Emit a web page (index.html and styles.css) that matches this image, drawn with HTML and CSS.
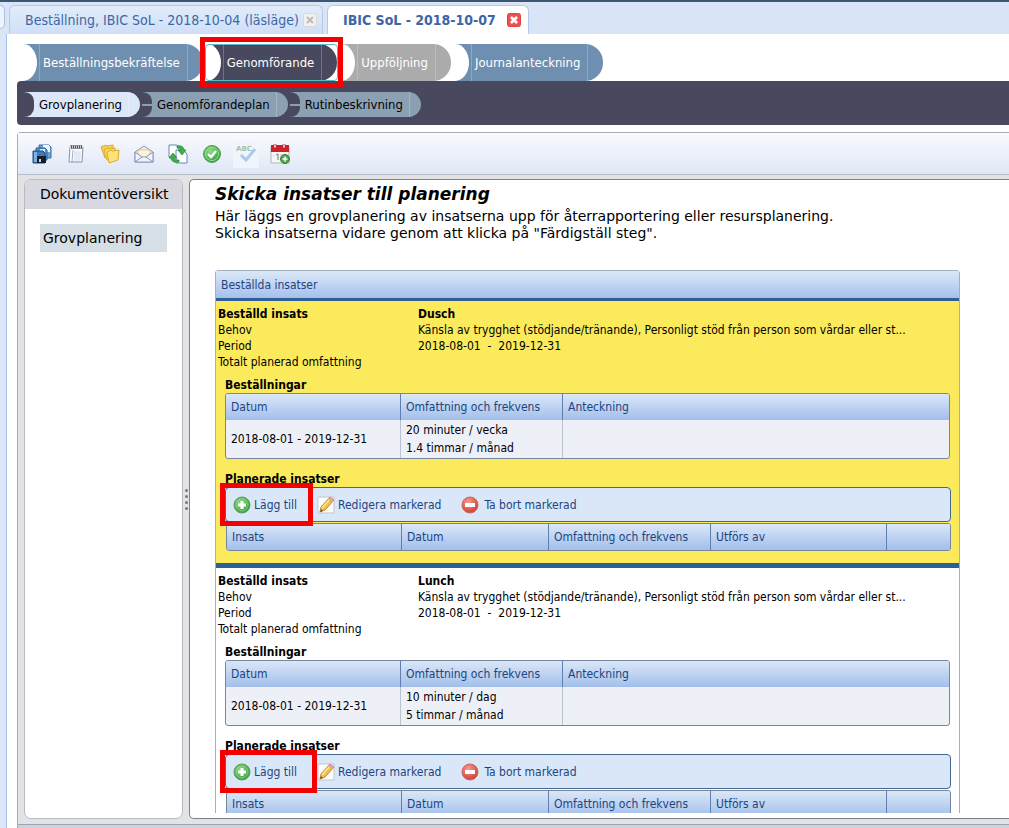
FILE: index.html
```html
<!DOCTYPE html>
<html lang="sv">
<head>
<meta charset="utf-8">
<title>IBIC SoL - 2018-10-07</title>
<link rel="stylesheet" href="styles.css">
</head>
<body>
<svg class="defs" aria-hidden="true">
  <defs>
    <radialGradient id="green" cx=".4" cy=".35" r=".7"><stop offset="0" stop-color="#8fdc84"/><stop offset="1" stop-color="#2f9a3c"/></radialGradient>
    <radialGradient id="red" cx=".4" cy=".3" r=".75"><stop offset="0" stop-color="#f79a8c"/><stop offset="1" stop-color="#cf3a33"/></radialGradient>
    <symbol id="add" viewBox="0 0 18 18"><circle cx="9" cy="9" r="8" fill="url(#green)" stroke="#5b9c5f"/><circle cx="9" cy="9" r="6" fill="none" stroke="#9be08f" opacity=".6"/><path d="M9 5v8M5 9h8" stroke="#fff" stroke-width="3"/></symbol>
    <symbol id="edit" viewBox="0 0 18 18"><path d="M1 1h16v16H1z" fill="#fcfcfc" stroke="#bfc6cf"/><path d="M13 1l4 3L8 14l-5 2 1-5z" fill="#f3c04a" stroke="#b98a35"/><path d="M13 1l4 3-2 2-4-3z" fill="#e8a0a0"/><path d="M3 16l1-3 2 2z" fill="#6b5a45"/><path d="M12 4l-7 8" stroke="#fde9a0" stroke-width="1.4"/></symbol>
    <symbol id="remove" viewBox="0 0 18 18"><circle cx="9" cy="9" r="8" fill="url(#red)" stroke="#d0645c"/><path d="M4 7h10v4H4z" fill="#fff"/></symbol>
  </defs>
</svg>

<nav class="tabs" aria-label="Flikar">
  <span class="tab-edge"></span>
  <div class="tab">
    <a href="#t1">Beställning, IBIC SoL - 2018-10-04 (läsläge)</a>
    <button class="tab-close" aria-label="Stäng"><svg viewBox="0 0 14 14"><rect x=".5" y=".5" width="13" height="13" rx="2" fill="#f1f1ee" stroke="#d9d9d6"/><path d="M4 4l6 6M10 4l-6 6" stroke="#bdbdbd" stroke-width="2"/></svg></button>
  </div>
  <div class="tab tab-active">
    <a href="#t2">IBIC SoL - 2018-10-07</a>
    <button class="tab-close" aria-label="Stäng"><svg viewBox="0 0 14 14"><rect x=".5" y=".5" width="13" height="13" rx="2" fill="#ee4f50" stroke="#d94143"/><path d="M4 4l6 6M10 4l-6 6" stroke="#fff" stroke-width="2.6"/></svg></button>
  </div>
</nav>

<main class="page">
  <nav class="steps" aria-label="Processteg">
    <button class="step"><span>Beställningsbekräftelse</span></button>
    <div class="marked marked-step"><button class="step step-current"><span>Genomförande</span></button></div>
    <button class="step step-grey"><span>Uppföljning</span></button>
    <button class="step"><span>Journalanteckning</span></button>
  </nav>
  <nav class="substeps" aria-label="Delsteg">
    <button class="substep substep-current"><span>Grovplanering</span></button>
    <button class="substep"><span>Genomförandeplan</span></button>
    <button class="substep"><span>Rutinbeskrivning</span></button>
  </nav>

  <section class="workspace">
    <div class="toolbar">
      <button aria-label="Spara"><svg viewBox="0 0 20 20"><path d="M7 1h10l2 2v11H7z" fill="#6aa3da" stroke="#3c6ea6"/><path d="M11 1h6l1 2v5h-7z" fill="#eef5fb"/><path d="M4 4h9l2 2v10H4z" fill="#5c97d0" stroke="#2b5c95"/><path d="M8 5h5v4H8z" fill="#dbe9f6"/><path d="M1 7h10l2 2v10H1z" fill="#3f79b8" stroke="#224a7c"/><path d="M2 8h3v10H2z" fill="#7db0e0"/><path d="M5 12h9v7H5z" fill="#16202c"/><path d="M7 15h2v3H7z" fill="#cfd8e2"/></svg></button>
      <button aria-label="Anteckning"><svg viewBox="0 0 20 20"><path d="M4 3h13l-1 15H3z" fill="#fafbfe" stroke="#8790a5"/><path d="M4 1h13v4H4z" fill="#d8dbe2"/><path d="M5 1l1 4M7 1l1 4M9 1l1 4M11 1l1 4M13 1l1 4M15 1l1 4" stroke="#3e4450"/><path d="M7 6L6 18" stroke="#9fb0d8"/><path d="M8 8h7M8 10h7M8 12h7M8 14h7M8 16h6" stroke="#c5cfe8" stroke-width=".8"/></svg></button>
      <button aria-label="Mappar"><svg viewBox="0 0 20 20"><path d="M1 3l5-2 1 1 6-1 1 10-9 3z" fill="#f5cf4d" stroke="#d9ac35"/><path d="M4 6l4-2 1 1 6-1 1 10-9 2z" fill="#fbdc68" stroke="#d9ac35"/><path d="M7 8l4-2 1 1 7-1-1 10-9 3z" fill="#fde374" stroke="#d9ac35"/></svg></button>
      <button aria-label="Meddelande"><svg viewBox="0 0 20 20"><path d="M1 8l9-6 9 6v10H1z" fill="#e8edf8" stroke="#8794bc"/><path d="M4 6h12v5l-6 4-6-4z" fill="#fff3dc" stroke="#e0b37a" stroke-width=".7"/><path d="M1 8l7 5h4l7-5v10H1z" fill="#eff3fc" stroke="#8794bc"/><path d="M1 18l7-5M19 18l-7-5" stroke="#8794bc"/></svg></button>
      <button aria-label="Uppdatera"><svg viewBox="0 0 20 20"><path d="M1 1h8l2 2v10H1z" fill="#fff" stroke="#6289b8"/><path d="M8 6h7l4 4v9H8z" fill="#fff" stroke="#6289b8"/><path d="M9 2c4-1 7 1 7 4h2l-4 5-4-5h3c0-2-2-2-4-2z" fill="#3fb047" stroke="#23842e" stroke-width=".7"/><path d="M11 18c-5 1-8-1-8-4H1l4-5 4 5H6c0 2 2 2 5 2z" fill="#3fb047" stroke="#23842e" stroke-width=".7"/></svg></button>
      <button aria-label="Färdigställ steg"><svg viewBox="0 0 20 20"><circle cx="10" cy="10" r="8.5" fill="url(#green)" stroke="#51a157"/><circle cx="10" cy="10" r="6.6" fill="none" stroke="#a7e29e" stroke-width=".8"/><path d="M6 10l3 3 5-6" fill="none" stroke="#fff" stroke-width="2.4"/></svg></button>
      <button class="tool-disabled" aria-label="Stavningskontroll" disabled><svg viewBox="0 0 20 20"><text x="0" y="7" class="abc">ABC</text><path d="M5 11l5 5 9-11" fill="none" stroke="#a9cbee" stroke-width="3"/></svg></button>
      <button aria-label="Ny bokning"><svg viewBox="0 0 20 20"><path d="M1 3h18v16H1z" fill="#f6f6f6" stroke="#b4b4b4"/><path d="M1 1h18v7H1z" fill="#cf1f2a"/><path d="M4 0h2v4H4zM13 0h2v4h-2z" fill="#fff" stroke="#8b2830" stroke-width=".6"/><path d="M6 11l2-1v6" stroke="#777" fill="none"/><path d="M3 12h1M10 11h3M10 14h2" stroke="#bbb"/><circle cx="15" cy="15" r="4.5" fill="#4da552" stroke="#347d3a"/><path d="M15 12.500v5M12.500 15h5" stroke="#fff" stroke-width="1.500"/></svg></button>
    </div>

    <div class="panes">
      <aside class="overview">
        <h2>Dokumentöversikt</h2>
        <a class="overview-item" href="#plan">Grovplanering</a>
      </aside>
      <div class="splitter"><i></i><i></i><i></i><i></i></div>
      <section class="document" id="plan">
        <div class="scroller">
          <h1>Skicka insatser till planering</h1>
          <p class="intro">Här läggs en grovplanering av insatserna upp för återrapportering eller resursplanering.<br>Skicka insatserna vidare genom att klicka på "Färdigställ steg".</p>

          <div class="orders">
            <div class="orders-head">Beställda insatser</div>

            <article class="order order-selected">
              <dl class="facts">
                <dt><b>Beställd insats</b></dt><dd><b>Dusch</b></dd>
                <dt>Behov</dt><dd>Känsla av trygghet (stödjande/tränande), Personligt stöd från person som vårdar eller st...</dd>
                <dt>Period</dt><dd>2018-08-01&nbsp; -&nbsp; 2019-12-31</dd>
                <dt>Totalt planerad omfattning</dt><dd></dd>
              </dl>
              <h3>Beställningar</h3>
              <div class="frame">
                <table>
                  <colgroup><col class="c-date"><col class="c-freq"><col></colgroup>
                  <thead><tr><th>Datum</th><th>Omfattning och frekvens</th><th>Anteckning</th></tr></thead>
                  <tbody><tr><td>2018-08-01 - 2019-12-31</td><td>20 minuter / vecka<br>1.4 timmar / månad</td><td></td></tr></tbody>
                </table>
              </div>
              <h3 class="planned">Planerade insatser</h3>
              <div class="actions">
                <div class="marked marked-add"><button><svg><use href="#add"/></svg>Lägg till</button></div>
                <button><svg><use href="#edit"/></svg>Redigera markerad</button>
                <button class="remove"><svg><use href="#remove"/></svg>Ta bort markerad</button>
              </div>
              <div class="frame frame-planned">
                <table>
                  <colgroup><col class="c-date"><col class="p-date"><col class="c-freq"><col class="p-user"><col></colgroup>
                  <thead><tr><th>Insats</th><th>Datum</th><th>Omfattning och frekvens</th><th>Utförs av</th><th></th></tr></thead>
                </table>
              </div>
            </article>

            <article class="order">
              <dl class="facts">
                <dt><b>Beställd insats</b></dt><dd><b>Lunch</b></dd>
                <dt>Behov</dt><dd>Känsla av trygghet (stödjande/tränande), Personligt stöd från person som vårdar eller st...</dd>
                <dt>Period</dt><dd>2018-08-01&nbsp; -&nbsp; 2019-12-31</dd>
                <dt>Totalt planerad omfattning</dt><dd></dd>
              </dl>
              <h3>Beställningar</h3>
              <div class="frame">
                <table>
                  <colgroup><col class="c-date"><col class="c-freq"><col></colgroup>
                  <thead><tr><th>Datum</th><th>Omfattning och frekvens</th><th>Anteckning</th></tr></thead>
                  <tbody><tr><td>2018-08-01 - 2019-12-31</td><td>10 minuter / dag<br>5 timmar / månad</td><td></td></tr></tbody>
                </table>
              </div>
              <h3 class="planned">Planerade insatser</h3>
              <div class="actions">
                <div class="marked marked-add marked-wide"><button><svg><use href="#add"/></svg>Lägg till</button></div>
                <button><svg><use href="#edit"/></svg>Redigera markerad</button>
                <button class="remove"><svg><use href="#remove"/></svg>Ta bort markerad</button>
              </div>
              <div class="frame frame-planned">
                <table>
                  <colgroup><col class="c-date"><col class="p-date"><col class="c-freq"><col class="p-user"><col></colgroup>
                  <thead><tr><th>Insats</th><th>Datum</th><th>Omfattning och frekvens</th><th>Utförs av</th><th></th></tr></thead>
                </table>
              </div>
            </article>
          </div>
        </div>
      </section>
    </div>
  </section>
</main>
</body>
</html>
```
FILE: styles.css
```css
* { box-sizing: border-box; }

body {
  margin: 0;
  height: 100vh;
  overflow: hidden;
  display: flex;
  flex-direction: column;
  border-top: 2px solid #3f5671;
  background: #dbe7f8;
  color: #000;
  font: 12px/16px "DejaVu Sans Condensed", "DejaVu Sans", sans-serif;
}

button {
  margin: 0;
  padding: 0;
  border: 0;
  background: none;
  color: inherit;
  font: inherit;
  white-space: nowrap;
}

a { color: inherit; text-decoration: none; }
h1, h2, h3, p, dl, dd { margin: 0; }
.defs { position: absolute; width: 0; height: 0; }

/* Document tabs */
.tabs {
  display: flex;
  flex: none;
  height: 32px;
  padding-top: 3px;
  gap: 4px;
  overflow: hidden;
  background: #d9e5f6;
  color: #3e66a5;
  font-size: 14px;
}
.tab-edge {
  width: 5px;
  height: 24px;
  border: 1px solid #a9c0e0;
  border-left: 0;
  border-radius: 0 6px 6px 0;
  background: #eef4fd;
}
.tab {
  display: flex;
  align-items: center;
  gap: 4px;
  padding: 0 5px 0 15px;
  border: 1px solid #b5cae8;
  border-bottom: 0;
  border-radius: 6px 6px 0 0;
  background: linear-gradient(#e1ecfb, #cfdff6);
  white-space: nowrap;
}
.tab-active { gap: 11px; padding-right: 7px; background: #fff; font-weight: bold; }
.tab-close, .tab-close svg { display: block; width: 14px; height: 14px; }

/* Page */
.page {
  flex: 1;
  min-height: 0;
  display: flex;
  flex-direction: column;
  margin-left: 6px;
  padding: 10px 0 0 10px;
  border-left: 1px solid #a8c0e4;
  background: #fff;
}

/* Process steps */
.steps { display: flex; flex: none; gap: 4px; padding-left: 6px; font-size: 13px; color: #fff; }
.step, .substep {
  display: flex;
  align-items: stretch;
  background: #6f8fb1;
  border-radius: 0 18px 18px 0;
}
.step { height: 37px; padding-right: 15px; }
.step::before, .substep::before {
  content: "";
  width: 14px;
  border-radius: 0 14px 14px 0 / 0 50% 50% 0;
  background: #fff;
}
.step span {
  display: flex;
  align-items: center;
  margin-left: 2px;
  padding: 0 7px 0 3px;
  border: 1px solid #ffffff38;
  border-width: 0 1px;
}
.step-current { background: #48495e; }
.step-grey { background: #ababab; }

/* Highlight frames around the controls to use */
.marked { position: relative; }
.marked::after {
  content: "";
  position: absolute;
  border: 5px solid #f40000;
  pointer-events: none;
}
.marked-step::before {
  content: "";
  position: absolute;
  inset: 0 -1px 0 -2px;
  border: 1px solid #5eb6c4;
  border-radius: 4px;
}
.marked-step::after { inset: -7px -6px -7px -7px; z-index: 1; }

.substeps {
  display: flex;
  flex: none;
  gap: 2px;
  padding: 11px 0 8px 7px;
  border-radius: 4px 0 0 4px;
  background: #48495e;
  font-size: 13px;
  color: #000;
}
.substep { height: 25px; padding-right: 11px; background: #8ca0b4; }
.substep::before { width: 10px; background: linear-gradient(#48495e 12px, #8ca0b4 12px 14px, #48495e 14px); }
.substep span { display: flex; align-items: center; padding: 0 6px 0 5px; border-right: 1px solid #ffffff38; }
.substep-current { background: #dce7f8; }
.substep-current::before { background: #48495e; }

/* Workspace */
.workspace {
  flex: 1;
  min-height: 0;
  display: flex;
  flex-direction: column;
  margin-top: 7px;
  border: 1px solid #a5adb8;
  border-right: 0;
  border-bottom: 0;
  border-radius: 4px 0 0;
  background: #e3e3e5;
}
.toolbar {
  display: flex;
  flex: none;
  align-items: center;
  gap: 8px;
  height: 42px;
  padding-left: 11px;
  border-bottom: 1px solid #b9bfc8;
  background: linear-gradient(#f9fafd, #dfe7f6);
}
.toolbar button { display: grid; place-items: center; width: 26px; height: 28px; }
.toolbar svg { width: 20px; height: 20px; }
.toolbar .tool-disabled { background: #f1f5fb; }
.abc { font: bold 7px "DejaVu Sans", sans-serif; fill: #9fc4b4; }

.panes {
  flex: 1;
  min-height: 0;
  display: flex;
  margin: 4px 0 5px 6px;
}
.workspace::after { content: ""; height: 3px; border-top: 1px solid #9aa7b8; background: #cdd3dc; }

.overview {
  flex: none;
  width: 159px;
  overflow: hidden;
  border: 1px solid #b8bac0;
  border-radius: 7px;
  background: #fff;
  font: 14px/20px "DejaVu Sans", Verdana, sans-serif;
}
.overview h2 {
  padding: 4px 0 5px 15px;
  background: #d7d8e0;
  font: inherit;
}
.overview-item { display: block; margin: 15px; padding: 4px 3px; background: #d5dfe5; }

.splitter {
  flex: none;
  width: 6px;
  display: flex;
  flex-direction: column;
  align-items: center;
  justify-content: center;
  gap: 3px;
}
.splitter i { width: 3px; height: 3px; border-radius: 50%; background: #777; }

.document {
  flex: 1;
  min-width: 0;
  display: flex;
  padding: 4px 0 5px 25px;
  border: 1px solid #7e828a;
  border-right: 0;
  border-radius: 5px 0 0 5px;
  background: #fff;
}
.scroller { flex: 1; overflow: hidden; padding-right: 49px; }
.scroller h1 { font: italic bold 17px/20px "DejaVu Sans", Verdana, sans-serif; }
.intro { padding-top: 4px; font: 14px/17px "DejaVu Sans", Verdana, sans-serif; white-space: nowrap; }

/* Orders */
.orders { margin-top: 28px; border: 1px solid #a3aebf; border-radius: 3px 3px 0 0; }
.orders-head {
  height: 30px;
  padding: 6px 5px 5px;
  border-bottom: 3px solid #30609a;
  background: linear-gradient(#dce8f8, #a5c0ec);
  color: #1c4580;
}
.order { padding: 5px 9px 12px; border-bottom: 5px solid #2d5f95; }
.order-selected { background: #fbeb5c; }
.facts { display: grid; grid-template-columns: 200px 1fr; margin-left: -7px; grid-auto-rows: 16px; white-space: nowrap; }
h3 { margin-top: 7px; font-size: 12px; line-height: 16px; }
h3.planned { margin-top: 12px; }

.frame { border: 1px solid #76869c; border-radius: 3px; overflow: hidden; background: #eef0f8; }
table { width: 100%; table-layout: fixed; border-collapse: separate; border-spacing: 0; }
.c-date { width: 174px; }
.c-freq { width: 162px; }
.p-date { width: 147px; }
.p-user { width: 176px; }
th {
  height: 26px;
  padding: 0 5px;
  background: linear-gradient(#dbe7f8, #a2bfea);
  color: #1c4580;
  font-weight: normal;
  text-align: left;
  white-space: nowrap;
}
th + th { border-left: 1px solid #5f7fae; }
td { height: 38px; padding: 0 5px; line-height: 18px; white-space: nowrap; }
td + td { border-left: 1px solid #bcc3d0; }

.actions {
  display: flex;
  align-items: center;
  height: 35px;
  margin-right: -1px;
  padding-left: 7px;
  border: 1px solid #45688f;
  border-radius: 4px;
  background: #dae7f8;
  color: #1c4580;
}
.actions button { display: flex; align-items: center; gap: 3px; margin-right: 20px; }
.actions svg { width: 18px; height: 18px; }
.actions .remove { gap: 5px; }
.marked-add::after { inset: -13px 4px -12px -13px; }
.marked-wide::after { right: 0; }
.frame-planned { margin: 1px -1px 0 1px; }
```
